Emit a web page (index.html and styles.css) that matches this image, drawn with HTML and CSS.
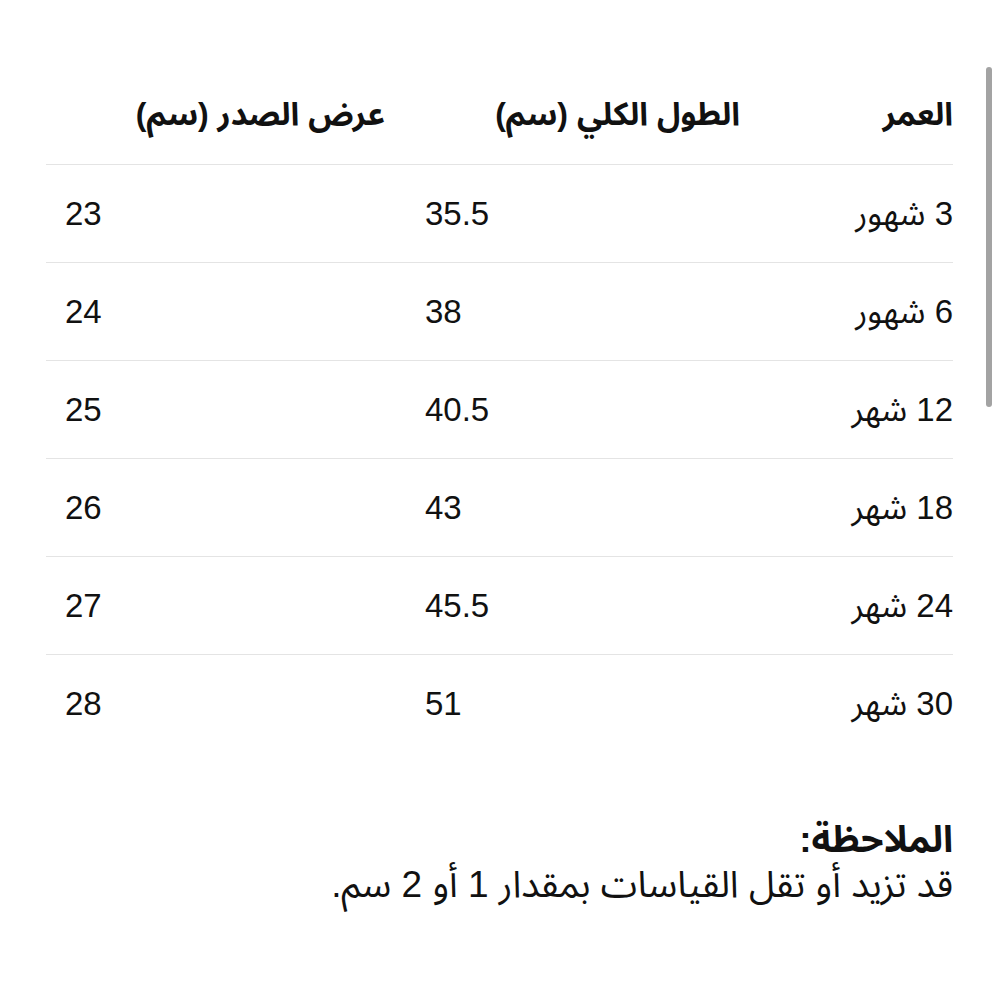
FILE: index.html
```html
<!DOCTYPE html>
<html lang="ar" dir="rtl">
<head>
<meta charset="utf-8">
<title>جدول المقاسات</title>
<link rel="stylesheet" href="styles.css">
</head>
<body>
<div class="page">
  <div class="size-table">
    <div class="row head">
      <div class="cell c1">العمر</div>
      <div class="cell c2">الطول الكلي (سم)</div>
      <div class="cell c3">عرض الصدر (سم)</div>
    </div>
    <div class="row">
      <div class="cell c1">3 شهور</div>
      <div class="cell c2 num" dir="ltr">35.5</div>
      <div class="cell c3 num" dir="ltr">23</div>
    </div>
    <div class="row">
      <div class="cell c1">6 شهور</div>
      <div class="cell c2 num" dir="ltr">38</div>
      <div class="cell c3 num" dir="ltr">24</div>
    </div>
    <div class="row">
      <div class="cell c1">12 شهر</div>
      <div class="cell c2 num" dir="ltr">40.5</div>
      <div class="cell c3 num" dir="ltr">25</div>
    </div>
    <div class="row">
      <div class="cell c1">18 شهر</div>
      <div class="cell c2 num" dir="ltr">43</div>
      <div class="cell c3 num" dir="ltr">26</div>
    </div>
    <div class="row">
      <div class="cell c1">24 شهر</div>
      <div class="cell c2 num" dir="ltr">45.5</div>
      <div class="cell c3 num" dir="ltr">27</div>
    </div>
    <div class="row last">
      <div class="cell c1">30 شهر</div>
      <div class="cell c2 num" dir="ltr">51</div>
      <div class="cell c3 num" dir="ltr">28</div>
    </div>
  </div>
  <div class="note">
    <div class="note-title">الملاحظة:</div>
    <div class="note-text">قد تزيد أو تقل القياسات بمقدار 1 أو 2 سم.</div>
  </div>
  <div class="scrollbar"></div>
</div>
</body>
</html>
```
FILE: styles.css
```css
html, body {
  margin: 0;
  padding: 0;
  background: #ffffff;
}
body {
  font-family: "Liberation Sans", "Noto Sans Arabic", "DejaVu Sans", sans-serif;
  color: #111111;
}
.page {
  position: relative;
  width: 1000px;
  height: 1000px;
  box-sizing: border-box;
  padding: 67px 47px 0 46px;
}
.size-table {
  display: flex;
  flex-direction: column;
}
.row {
  display: grid;
  grid-template-columns: 193px 355px 1fr;
  height: 98px;
  box-sizing: border-box;
  border-bottom: 1px solid #e4e4e4;
  align-items: center;
}
.row.last {
  border-bottom: none;
}
.cell {
  font-size: 33px;
  line-height: 40px;
  white-space: nowrap;
}
.c1 {
  padding: 0;
  text-align: right;
}
.c2, .c3 {
  padding: 0 20px;
}
.c3 {
  padding-left: 19px;
}
.head .cell {
  font-size: 32px;
  font-weight: bold;
  text-align: right;
  padding-bottom: 3px;
}
.num {
  font-size: 33px;
  text-align: left;
}
.note {
  margin-top: 64px;
  font-size: 37px;
  line-height: 45px;
}
.note-title {
  font-weight: bold;
}
.scrollbar {
  position: absolute;
  left: 986px;
  top: 67px;
  width: 6px;
  height: 340px;
  border-radius: 3px;
  background: #a3a3a3;
}
```
